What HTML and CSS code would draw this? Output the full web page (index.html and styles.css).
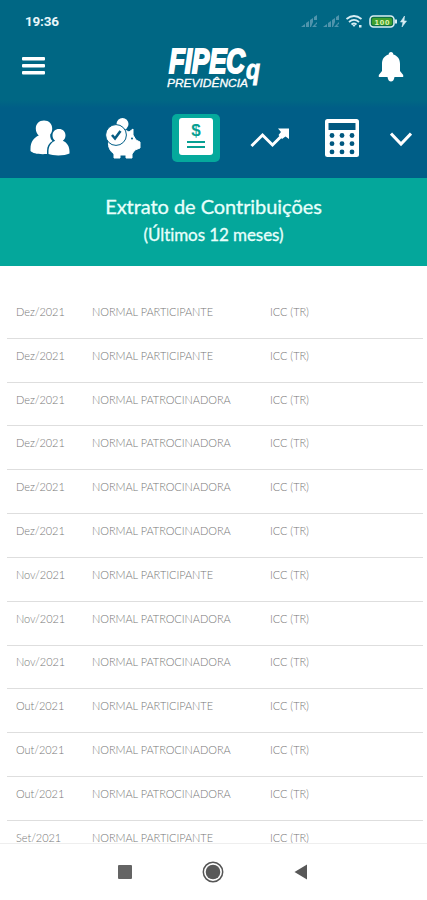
FILE: index.html
```html
<!DOCTYPE html>
<html lang="pt-BR">
<head>
    <meta charset="UTF-8">
    <meta name="viewport" content="width=device-width, initial-scale=1.0">
    <title>Extrato de Contribuições</title>
    <link rel="stylesheet" href="styles.css">
</head>
<body>
    <header class="top">
        <div class="status-bar">
            <span class="clock">19:36</span>
            <svg class="status-icons" width="107" height="16" viewBox="0 0 107 16">
                <g fill="#4f94ac">
                    <path d="M0 13L4 10V13zM5 13V9L8 7V13zM9 13V6L12 4V8L10 13zM13 3L16 1V6H13zM11 13L16 8V10L14 11L16 13z"/>
                    <path d="M22 13L26 10V13zM27 13V9L30 7V13zM31 13V6L34 4V8L32 13zM35 3L38 1V6H35zM33 13L38 8V10L36 11L38 13z"/>
                </g>
                <g fill="none" stroke="#d8edf3" stroke-width="1.8">
                    <path d="M45.500 5Q53 -1 60.500 5M48 8Q53 3.800 58 8M50.500 10.500Q53 8.500 55.500 10.500"/>
                </g>
                <path d="M51.500 11L53 13L54.500 11zM58 11h2.500v2.500h-2.500z" fill="#d8edf3"/>
                <rect x="69" y="2" width="24" height="11" rx="3.500" fill="#0b7148" stroke="#d8edf3" stroke-width="1.600"/>
                <rect x="71" y="4" width="20" height="7" rx="1.500" fill="#3f9f2e"/>
                <text class="battery" x="81" y="10.500" text-anchor="middle" textLength="15">100</text>
                <path d="M94 5.500h2v4h-2z" fill="#d8edf3"/>
                <path d="M103.500 2L99.500 8H102L101 13L105.500 7H103z" fill="#d8edf3" stroke="#d8edf3" stroke-width="0.6"/>
            </svg>
        </div>
        <div class="app-bar">
            <svg class="menu" width="23" height="18" viewBox="0 0 23 18" fill="#fff">
                <rect width="23" height="3.400" rx="1"/><rect y="7" width="23" height="3.400" rx="1"/><rect y="14" width="23" height="3.400" rx="1"/>
            </svg>
            <svg class="logo" width="96" height="46" viewBox="0 0 96 46">
                <g transform="translate(2 28.500) scale(1 1.360)">
                    <text class="brand" x="0" y="0" textLength="76" lengthAdjust="spacingAndGlyphs">FIPEC</text>
                </g>
                <text class="brand brand-q" x="79" y="35" textLength="14" lengthAdjust="spacingAndGlyphs">q</text>
                <text class="brand-sub" x="0" y="42.500" textLength="81" lengthAdjust="spacingAndGlyphs">PREVIDÊNCIA</text>
            </svg>
            <svg class="bell" width="26" height="30" viewBox="0 0 26 30" fill="#fff">
                <path d="M13 0C11.500 0 10.700 1 10.700 2.500C6 3.800 4 7.500 4 12V19L0.800 23V25H25.200V23L22 19V12C22 7.500 20 3.800 15.300 2.500C15.300 1 14.500 0 13 0zM9.500 25H16.500C16 28 14.800 29.500 13 29.500C11.200 29.500 10 28 9.500 25z"/>
            </svg>
        </div>
    </header>

    <nav class="tabs">
        <svg width="40" height="36" viewBox="0 0 40 36" fill="#fff">
            <path d="M14 0.500C9 0.500 5.800 4 5.800 8.500C5.800 11.500 7 14 8.800 15.500C4 17.500 0.500 22 0.500 28.500V31C3 33.500 8 34.500 17 34V31C17 26.500 19 23 22.500 21C20.800 19.500 20 17.500 20.200 14.500C21.500 13 22.200 11 22.200 8.500C22.200 4 19 0.500 14 0.500z"/>
            <path d="M29 9C25.200 9 22.500 11.700 22.500 15.300C22.500 17.700 23.500 19.600 25.200 20.800C21.300 22.500 18.500 26 18.500 31.500V34C23 36 35 36 39.500 33.500V31.500C39.500 26 36.700 22.500 32.800 20.800C34.500 19.600 35.500 17.700 35.500 15.300C35.500 11.700 32.800 9 29 9z"/>
        </svg>
        <svg width="36" height="41" viewBox="0 0 36 41">
            <circle cx="17.500" cy="6" r="6" fill="#fff"/>
            <path d="M18 11L24 14L28 11V17L31 22L35 24V30L30 32L27 36V40H21V37H15V40H9V36C5 33 3 29 3.500 24z" fill="#fff" stroke="#fff" stroke-linejoin="round"/>
            <circle cx="11" cy="17" r="10.400" fill="#fff" stroke="#005e87" stroke-width="1"/>
            <path d="M7 17L10 20.500L15.500 13" fill="none" stroke="#075d84" stroke-width="2.600"/>
            <circle cx="27" cy="20.500" r="1" fill="#005e87"/>
        </svg>
        <div class="tab-active">
            <svg width="34" height="37" viewBox="0 0 34 37">
                <rect width="34" height="37" rx="3" fill="#fff"/>
                <text class="dollar" x="17" y="18" text-anchor="middle">$</text>
                <path d="M8 24H26M8 29H26" stroke="#079f92" stroke-width="2"/>
            </svg>
        </div>
        <svg width="40" height="20" viewBox="0 0 40 20">
            <path d="M1.500 18L12.500 7L22.500 17L34 5.500" fill="none" stroke="#fff" stroke-width="3"/>
            <path d="M28 0.500H39V11L35.500 8.500L32 11L28.500 7L31 4z" fill="#fff"/>
        </svg>
        <svg width="34" height="38" viewBox="0 0 34 38">
            <rect width="34" height="38" rx="2.500" fill="#fff"/>
            <g fill="#005880">
                <path d="M3.500 4H30.500V11H3.500z"/>
                <circle cx="7" cy="16.500" r="2.400"/><circle cx="17" cy="16.500" r="2.400"/><circle cx="27" cy="16.500" r="2.400"/>
                <circle cx="7" cy="24.700" r="2.400"/><circle cx="17" cy="24.700" r="2.400"/><circle cx="27" cy="24.700" r="2.400"/>
                <circle cx="7" cy="32.900" r="2.400"/><circle cx="17" cy="32.900" r="2.400"/><circle cx="27" cy="32.900" r="2.400"/>
            </g>
        </svg>
        <svg class="chevron" width="22" height="15" viewBox="0 0 22 15">
            <path d="M1 1.500L11 12L21 1.500" fill="none" stroke="#fff" stroke-width="3"/>
        </svg>
    </nav>

    <section class="heading">
        <h1 class="title">Extrato de Contribuições</h1>
        <p class="subtitle">(Últimos 12 meses)</p>
    </section>

    <main class="list" id="list"></main>

    <footer class="nav-bar">
        <svg width="14" height="14"><rect width="14" height="14" rx="1" fill="#646464"/></svg>
        <svg width="22" height="22" viewBox="0 0 22 22">
            <circle cx="11" cy="11" r="9.700" fill="none" stroke="#555" stroke-width="1.500"/>
            <circle cx="11" cy="11" r="7.300" fill="#585858"/>
        </svg>
        <svg width="14" height="16" viewBox="0 0 14 16"><path d="M0.500 8L13 0.500V15.500z" fill="#585858"/></svg>
    </footer>

    <script src="script.js"></script>
</body>
</html>
```
FILE: styles.css
```css
* {
    box-sizing: border-box;
}
body {
    margin: 0;
    height: 900px;
    display: flex;
    flex-direction: column;
    overflow: hidden;
    background: #fff;
    font-family: Lato, sans-serif;
}
svg {
    display: block;
    flex-shrink: 0;
}
.top {
    height: 100px;
    flex-shrink: 0;
    background: #006784;
}
.status-bar {
    display: flex;
    justify-content: space-between;
    height: 44px;
    padding: 13px 19px 0 25px;
}
.clock {
    color: #e8f6fa;
    font: bold 13.5px/17px Roboto, sans-serif;
    letter-spacing: -0.2px;
}
.status-icons {
    margin-top: 1px;
}
.battery {
    fill: #e2f5b4;
    font: bold 8px "Liberation Sans", sans-serif;
}
.app-bar {
    display: flex;
    align-items: flex-start;
    padding: 0 23px 0 22px;
}
.menu {
    margin-top: 13px;
}
.logo {
    margin-left: 122px;
    overflow: visible;
}
.bell {
    margin: 8px 0 0 auto;
}
.brand {
    fill: #fff;
    stroke: #fff;
    stroke-width: 1.6;
    font: italic bold 26px "Liberation Sans", sans-serif;
}
.brand-q {
    font-size: 27px;
    stroke-width: 1;
}
.brand-sub {
    fill: #fff;
    stroke: #fff;
    stroke-width: 0.3;
    font: italic 11.5px "Liberation Sans", sans-serif;
}
.tabs {
    display: grid;
    grid-template-columns: 74px 72px 74px 73px 71px 47px;
    align-items: center;
    justify-items: center;
    height: 78px;
    flex-shrink: 0;
    padding: 0 0 2px 13px;
    background: linear-gradient(#006784, #005e87 8px);
}
.chevron {
    margin-top: 3px;
}
.tab-active {
    display: flex;
    justify-content: center;
    width: 48px;
    height: 48px;
    padding-top: 4px;
    border-radius: 5px;
    background: #05a99c;
}
.dollar {
    fill: #079f92;
    font: bold 17px "Liberation Sans", sans-serif;
}
.heading {
    height: 88px;
    flex-shrink: 0;
    padding-top: 15px;
    background: #04a79b;
    color: #e8fffb;
    text-align: center;
}
.title {
    margin: 0;
    font-size: 20px;
    font-weight: 400;
    line-height: 26px;
    letter-spacing: -0.05px;
    -webkit-text-stroke: 0.3px #e8fffb;
}
.subtitle {
    margin: 5px 0 0;
    font-size: 17px;
    line-height: 22px;
    letter-spacing: -0.08px;
    -webkit-text-stroke: 0.3px #e8fffb;
}
.list {
    flex: 1;
    min-height: 0;
    overflow: hidden;
    padding: 29px 4px 0 7px;
}
.row {
    display: grid;
    grid-template-columns: 76px 178px 1fr;
    align-items: center;
    height: 43.82px;
    padding: 0 0 9px 9px;
    border-bottom: 1px solid #dedede;
    color: #777;
    font-size: 11px;
    font-weight: 300;
    line-height: 14px;
    letter-spacing: -0.06px;
}
.nav-bar {
    display: flex;
    align-items: center;
    gap: 70px;
    height: 57px;
    flex-shrink: 0;
    padding-left: 118px;
    border-top: 1px solid #eee;
}
```
FILE: script.js
```js
const contributions = [
    ["Dez/2021", "PARTICIPANTE"],
    ["Dez/2021", "PARTICIPANTE"],
    ["Dez/2021", "PATROCINADORA"],
    ["Dez/2021", "PATROCINADORA"],
    ["Dez/2021", "PATROCINADORA"],
    ["Dez/2021", "PATROCINADORA"],
    ["Nov/2021", "PARTICIPANTE"],
    ["Nov/2021", "PATROCINADORA"],
    ["Nov/2021", "PATROCINADORA"],
    ["Out/2021", "PARTICIPANTE"],
    ["Out/2021", "PATROCINADORA"],
    ["Out/2021", "PATROCINADORA"],
    ["Set/2021", "PARTICIPANTE"]
];

document.getElementById("list").innerHTML = contributions.map(([month, payer]) => `
    <div class="row">
        <span>${month}</span>
        <span>NORMAL ${payer}</span>
        <span>ICC (TR)</span>
    </div>`).join("");
```
